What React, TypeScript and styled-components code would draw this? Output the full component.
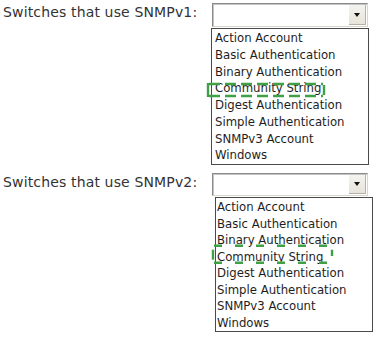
import styled, { createGlobalStyle } from 'styled-components';

const GlobalStyle = createGlobalStyle`
  html, body {
    margin: 0;
    padding: 0;
    background: #ffffff;
  }
`;

const Page = styled.div`
  width: 377px;
  height: 340px;
  padding: 3px 0 0 3px;
  box-sizing: border-box;
  display: flex;
  flex-direction: column;
  gap: 8px;
  overflow: hidden;
`;

const Group = styled.section`
  display: flex;
  flex-direction: column;
`;

const Row = styled.div`
  display: flex;
  align-items: flex-start;
`;

const Label = styled.span`
  width: 209px;
  flex-shrink: 0;
  margin-top: 1px;
  font-family: "DejaVu Sans", Verdana, sans-serif;
  font-size: 14px;
  line-height: 16px;
  letter-spacing: 0.15px;
  color: #333333;
  white-space: nowrap;
`;

const Select = styled.div<{ $height: number }>`
  width: 156px;
  height: ${p => p.$height}px;
  box-sizing: border-box;
  background: #ffffff;
  border: 1px solid;
  border-color: #8a8a8a #d8d6cc #d8d6cc #8a8a8a;
  box-shadow: inset 1px 1px 0 #c4c4c4;
  display: flex;
  justify-content: flex-end;
  align-items: stretch;
  padding: 1px;
`;

const DropButton = styled.div`
  width: 17px;
  box-sizing: border-box;
  background: linear-gradient(#f4f3ee, #e6e4da);
  border-right: 1px solid #b4b2a6;
  border-bottom: 1px solid #b4b2a6;
  display: flex;
  align-items: center;
  justify-content: center;
`;

const Arrow = styled.span`
  width: 0;
  height: 0;
  border-left: 3.5px solid transparent;
  border-right: 3.5px solid transparent;
  border-top: 4px solid #111111;
`;

const List = styled.ul<{ $offset: number; $row: number }>`
  list-style: none;
  margin: 1px 0 0 ${p => 209 + p.$offset}px;
  padding: 1px 0 0;
  width: 158px;
  box-sizing: border-box;
  border: 1px solid #4a4a4a;
  background: #ffffff;
  font-family: "DejaVu Sans Condensed", "DejaVu Sans", Tahoma, sans-serif;
  font-size: 13px;
  line-height: ${p => p.$row}px;
  color: #1e1e1e;
`;

const Item = styled.li<{ $indent: number }>`
  position: relative;
  padding-left: ${p => p.$indent}px;
  white-space: nowrap;
`;

const Mark = styled.svg`
  position: absolute;
  overflow: visible;
  pointer-events: none;
`;

const GREEN = '#3fa046';

type Box = { x: number; y: number; w: number; h: number; top: number; bottom: number; left: [number, number]; right: [number, number]; dash: string };

function Highlight({ box }: { box: Box }) {
  const { x, y, w, h, top, bottom, left, right, dash } = box;
  return (
    <Mark width={w} height={h} style={{ left: x, top: y }}>
      <g stroke={GREEN} strokeWidth={2.4} fill="none">
        <line x1={3} y1={top} x2={w - 3} y2={top} strokeDasharray={dash} />
        <line x1={3} y1={bottom} x2={w - 3} y2={bottom} strokeDasharray={dash} />
        <line x1={2} y1={left[0]} x2={2} y2={left[1]} />
        <line x1={w - 2} y1={right[0]} x2={w - 2} y2={right[1]} />
      </g>
    </Mark>
  );
}

const OPTIONS = [
  'Action Account',
  'Basic Authentication',
  'Binary Authentication',
  'Community String',
  'Digest Authentication',
  'Simple Authentication',
  'SNMPv3 Account',
  'Windows',
];

interface DropdownProps {
  label: string;
  selectHeight: number;
  offset: number;
  row: number;
  indent: number;
  mark: Box;
}

function Dropdown({ label, selectHeight, offset, row, indent, mark }: DropdownProps) {
  return (
    <Group>
      <Row>
        <Label>{label}</Label>
        <Select $height={selectHeight}>
          <DropButton><Arrow /></DropButton>
        </Select>
      </Row>
      <List $offset={offset} $row={row}>
        {OPTIONS.map(o => (
          <Item key={o} $indent={indent}>
            {o}
            {o === 'Community String' && <Highlight box={mark} />}
          </Item>
        ))}
      </List>
    </Group>
  );
}

export default function App() {
  return (
    <>
      <GlobalStyle />
      <Page>
        <Dropdown
          label="Switches that use SNMPv1:"
          selectHeight={24}
          offset={-1}
          row={16.75}
          indent={3}
          mark={{ x: -6, y: 2, w: 120, h: 16, top: 2, bottom: 14, left: [1, 15], right: [3, 13], dash: '11 5' }}
        />
        <Dropdown
          label="Switches that use SNMPv2:"
          selectHeight={23}
          offset={3}
          row={16.5}
          indent={1}
          mark={{ x: -5, y: -5.5, w: 123, h: 23, top: 2.7, bottom: 19.8, left: [6.7, 16.7], right: [6.7, 13], dash: '8 13' }}
        />
      </Page>
    </>
  );
}
